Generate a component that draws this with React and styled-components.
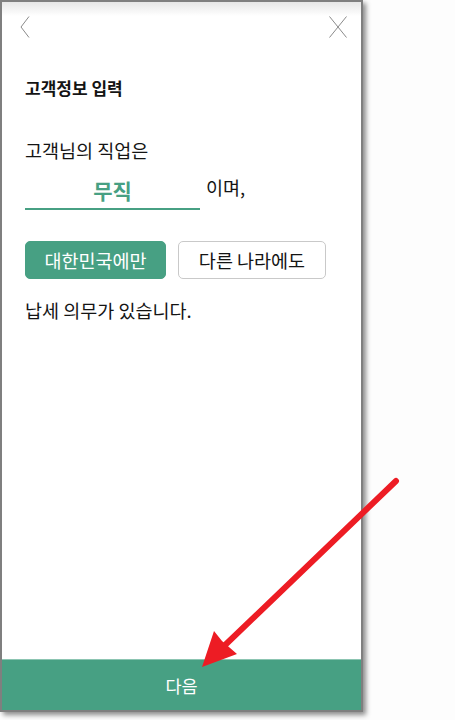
import styled, { createGlobalStyle } from "styled-components";

const GlobalStyle = createGlobalStyle`
    html, body {
        margin: 0;
        padding: 0;
        background: #fdfdfd;
        font-family: "Noto Sans CJK KR", "Noto Sans", sans-serif;
    }
`;

const GREEN = "#47a083";

const App = () => {
    return (
        <Page>
            <GlobalStyle />
            <Phone>
                <Header>
                    <IconBtn aria-label="back">
                        <svg width="10" height="22" viewBox="0 0 10 22">
                            <polyline points="9,0.5 1,11 9,21.5" fill="none" stroke="#8a8a8a" strokeWidth="1" />
                        </svg>
                    </IconBtn>
                    <IconBtn aria-label="close">
                        <svg width="18" height="22" viewBox="0 0 18 22">
                            <line x1="0.5" y1="0.5" x2="17.5" y2="21.5" stroke="#8a8a8a" strokeWidth="1" />
                            <line x1="17.5" y1="0.5" x2="0.5" y2="21.5" stroke="#8a8a8a" strokeWidth="1" />
                        </svg>
                    </IconBtn>
                </Header>
                <Content>
                    <Title>고객정보 입력</Title>
                    <Line>고객님의 직업은</Line>
                    <FieldRow>
                        <Field>무직</Field>
                        <Suffix>이며,</Suffix>
                    </FieldRow>
                    <Choices>
                        <Choice $active $w={141}>대한민국에만</Choice>
                        <Choice $w={148}>다른 나라에도</Choice>
                    </Choices>
                    <Line $top={19}>납세 의무가 있습니다.</Line>
                </Content>
                <NextBar>다음</NextBar>
            </Phone>
            <Arrow width="455" height="720" viewBox="0 0 455 720">
                <line x1="396" y1="481" x2="222" y2="648" stroke="#ed1c24" strokeWidth="6" strokeLinecap="round" />
                <polygon points="202,667 214,631 222,641 237,654" fill="#ed1c24" />
            </Arrow>
        </Page>
    );
};
export default App;

const Page = styled.div`
    position: relative;
    width: 455px;
    height: 720px;
    overflow: hidden;
`;

const Phone = styled.div`
    width: 359px;
    height: 708px;
    border: solid 2px #7f7f7f;
    background: #fff;
    box-shadow: 3px 3px 5px rgba(0, 0, 0, 0.45);
    display: flex;
    flex-direction: column;
`;

const Header = styled.div`
    height: 49px;
    display: flex;
    align-items: center;
    justify-content: space-between;
    padding: 0 14px 0 18px;
    background: linear-gradient(#e6e6e6, #ffffff 14px);
`;

const IconBtn = styled.div`
    display: flex;
    align-items: center;
`;

const Content = styled.div`
    display: flex;
    flex-direction: column;
    align-items: flex-start;
    padding: 0 23px;
    color: #141414;
`;

const Title = styled.h1`
    margin: 26px 0 0;
    font-size: 17px;
    line-height: 22px;
    font-weight: 700;
`;

const Line = styled.p`
    margin: ${({ $top }) => $top ?? 39}px 0 0;
    font-size: 18.5px;
    line-height: 24px;
    font-weight: 400;
`;

const FieldRow = styled.div`
    display: flex;
    align-items: flex-end;
    margin-top: 10px;
`;

const Field = styled.div`
    width: 175px;
    height: 36px;
    border-bottom: solid 2px ${GREEN};
    display: flex;
    align-items: center;
    justify-content: center;
    color: ${GREEN};
    font-size: 21px;
    font-weight: 700;
`;

const Suffix = styled.span`
    margin: 0 0 11px 6px;
    font-size: 18.5px;
    line-height: 24px;
`;

const Choices = styled.div`
    display: flex;
    gap: 12px;
    margin-top: 31px;
`;

const Choice = styled.button`
    width: ${({ $w }) => $w}px;
    height: 38px;
    box-sizing: border-box;
    border-radius: 5px;
    border: solid 1px ${({ $active }) => ($active ? GREEN : "#c9c9c9")};
    background: ${({ $active }) => ($active ? GREEN : "#fff")};
    color: ${({ $active }) => ($active ? "#fff" : "#141414")};
    font-family: inherit;
    font-size: 18.5px;
    padding: 0;
    cursor: pointer;
`;

const NextBar = styled.div`
    margin-top: auto;
    height: 50px;
    display: flex;
    align-items: center;
    justify-content: center;
    background: ${GREEN};
    border-top: solid 1px #8cc5b2;
    color: #fff;
    font-size: 17.5px;
`;

const Arrow = styled.svg`
    position: absolute;
    top: 0;
    left: 0;
    pointer-events: none;
`;
